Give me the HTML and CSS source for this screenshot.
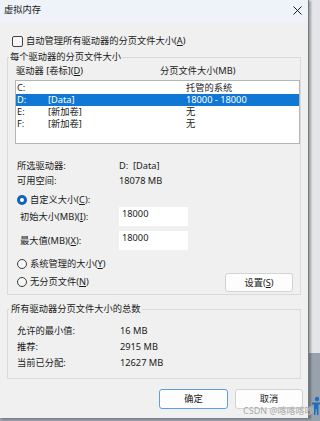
FILE: index.html
```html
<!DOCTYPE html>
<html lang="zh-CN">

<head>
    <meta charset="UTF-8">
    <meta name="viewport" content="width=device-width, initial-scale=1.0">
    <title>虚拟内存</title>
    <link rel="stylesheet" href="styles.css">
</head>

<body>
    <div class="dialog">
        <div class="titlebar">
            <span class="title">虚拟内存</span>
            <svg class="close" width="9" height="9" viewBox="0 0 9 9">
                <path d="M0.5 0.5 L8.5 8.5 M8.5 0.5 L0.5 8.5" stroke="#1b1b1b" stroke-width="1" fill="none" />
            </svg>
        </div>

        <label class="check-row">
            <span class="checkbox"></span>
            <span>自动管理所有驱动器的分页文件大小(<u>A</u>)</span>
        </label>

        <fieldset class="group group-drives">
            <legend>每个驱动器的分页文件大小</legend>
            <div class="list-head">
                <span>驱动器 [卷标](<u>D</u>)</span>
                <span>分页文件大小(MB)</span>
            </div>
            <div class="listbox">
                <div class="list-row"><span>C:</span><span></span><span>托管的系统</span></div>
                <div class="list-row selected"><span>D:</span><span>[Data]</span><span>18000 - 18000</span></div>
                <div class="list-row"><span>E:</span><span>[新加卷]</span><span>无</span></div>
                <div class="list-row"><span>F:</span><span>[新加卷]</span><span>无</span></div>
            </div>

            <div class="info">
                <span>所选驱动器:</span><span class="keep">D:  [Data]</span>
                <span>可用空间:</span><span>18078 MB</span>
            </div>

            <div class="radio-row radio-custom"><span class="radio checked"></span><span>自定义大小(<u>C</u>):</span></div>
            <div class="field-row field-first">
                <label>初始大小(MB)(<u>I</u>):</label>
                <input class="size-input" type="text" value="18000">
            </div>
            <div class="field-row field-second">
                <label>最大值(MB)(<u>X</u>):</label>
                <input class="size-input" type="text" value="18000">
            </div>
            <div class="radio-row radio-system"><span class="radio"></span><span>系统管理的大小(<u>Y</u>)</span></div>
            <div class="last-row">
                <div class="radio-row"><span class="radio"></span><span>无分页文件(<u>N</u>)</span></div>
                <button class="btn btn-set">设置(<u>S</u>)</button>
            </div>
        </fieldset>

        <fieldset class="group group-total">
            <legend>所有驱动器分页文件大小的总数</legend>
            <div class="totals">
                <span>允许的最小值:</span><span>16 MB</span>
                <span>推荐:</span><span>2915 MB</span>
                <span>当前已分配:</span><span>12627 MB</span>
            </div>
        </fieldset>

        <div class="actions">
            <button class="btn btn-ok">确定</button>
            <button class="btn">取消</button>
        </div>
    </div>

    <div class="watermark">CSDN @喀喀喀吵</div>
    <svg class="side-icon" width="9" height="20" viewBox="0 0 9 20">
        <circle cx="5" cy="3" r="2.2" fill="#1f6fc0" />
        <path d="M0 6.5 L9 6.5 L9 8.5 L6.5 8.5 L6.5 19 L5 19 L4.6 13 L3.8 13 L3.4 19 L2 19 L2 8.5 L0 8.5 Z" fill="#1f6fc0" />
    </svg>
</body>

</html>
```

FILE: styles.css
```css
body {
    margin: 0;
    width: 320px;
    height: 421px;
    overflow: hidden;
    background: linear-gradient(#e4e5e8 0, #e4e5e8 353px, #98a2ac 353px);
    font-family: "Noto Sans", "Noto Sans CJK SC", sans-serif;
    font-size: 9.25px;
    line-height: 12px;
    color: #1b1b1b;
}

.dialog {
    width: 308px;
    height: 418px;
    background-color: #f0f0f0;
    border-right: 1px solid #7a7a7a;
    box-shadow: 2px 1px 2px rgba(0, 0, 0, 0.3);
}

.titlebar {
    height: 22px;
    background-color: #eef3f9;
    display: flex;
    align-items: center;
    justify-content: space-between;
    padding: 0 6px 0 4px;
}

.title {
    margin-top: -2px;
}

.close {
    margin-top: -2px;
}

u {
    text-decoration: underline;
    text-underline-offset: 1px;
}

.check-row {
    display: flex;
    align-items: center;
    gap: 3px;
    height: 12px;
    margin: 13px 0 0 12px;
}

.checkbox {
    width: 9px;
    height: 9px;
    border: 1px solid #444;
    border-radius: 2px;
    background-color: #f7f7f7;
}

/* group boxes */
.group {
    margin: 4px 7px 0 7px;
    padding: 0 0 2px 0;
    border: 1px solid #dadada;
    min-width: 0;
}

.group legend {
    padding: 0 1px;
    margin-left: 1px;
    line-height: 12px;
}

.list-head {
    display: grid;
    grid-template-columns: 144px 1fr;
    margin: 2px 0 0 8px;
}

.listbox {
    margin: 3px 0 0 7px;
    height: 64px;
    box-sizing: border-box;
    border: 1px solid #b5b5b5;
    background-color: white;
    padding-top: 1px;
}

.list-row {
    display: grid;
    grid-template-columns: 31px 138px 1fr;
    height: 12px;
    padding-left: 1px;
}

.list-row.selected {
    background-color: #0f78d4;
    color: white;
}

.info {
    display: grid;
    grid-template-columns: 102px 1fr;
    row-gap: 3px;
    margin: 16px 0 0 9px;
}

.keep {
    white-space: pre;
}

.radio-row {
    display: flex;
    align-items: center;
    gap: 3px;
    height: 12px;
    margin-left: 9px;
}

.radio {
    width: 8px;
    height: 8px;
    border: 1px solid #3a3a3a;
    border-radius: 50%;
    background-color: #f7f7f7;
}

.radio.checked {
    width: 4px;
    height: 4px;
    border: 3px solid #0f64b8;
    background-color: white;
}

.radio-custom {
    margin-top: 7px;
}

.field-row {
    display: grid;
    grid-template-columns: 99px 69px;
    align-items: center;
    height: 20px;
    margin-left: 12px;
}

.field-first {
    margin-top: 1px;
}

.field-second {
    margin-top: 4px;
}

.size-input {
    width: 69px;
    height: 20px;
    box-sizing: border-box;
    border: none;
    border-bottom: 1px solid #f2f2f2;
    background-color: white;
    padding: 1px 3px 7px;
    font: inherit;
    color: #1b1b1b;
    line-height: 12px;
}

.radio-system {
    margin-top: 7px;
}

.last-row {
    display: flex;
    align-items: center;
    justify-content: space-between;
    height: 19px;
    margin: 3px 7px 0 0;
}

.last-row .radio-row {
    margin-top: -1px;
}

.btn {
    height: 19px;
    width: 68px;
    box-sizing: border-box;
    padding: 0;
    border: 1px solid #d3d3d3;
    border-radius: 3px;
    background-color: #fdfdfd;
    font: inherit;
    line-height: 12px;
    color: #1b1b1b;
}

.group-total {
    margin-top: 8px;
    padding-bottom: 9px;
}

.group-total legend {
    margin-left: 2px;
}

.totals {
    display: grid;
    grid-template-columns: 103px 1fr;
    row-gap: 4px;
    margin: 10px 0 0 9px;
}

.actions {
    display: flex;
    justify-content: flex-end;
    gap: 7px;
    margin: 10px 5px 0 0;
}

.actions .btn {
    height: 20px;
}

.btn-ok {
    width: 69px;
    border-color: #5c9ee0;
}

.watermark {
    position: absolute;
    left: 243px;
    top: 405px;
    font-size: 9px;
    color: #a3a3a3;
    text-shadow: 0 0 1px #fff;
    white-space: nowrap;
}

.side-icon {
    position: absolute;
    left: 312px;
    top: 396px;
}
```
